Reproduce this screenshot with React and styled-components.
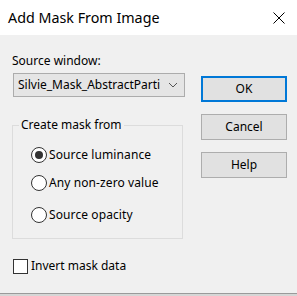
import React from "react";
import styled, { createGlobalStyle } from "styled-components";

const GlobalStyle = createGlobalStyle`
  html, body {
    margin: 0;
    padding: 0;
    background: #d6d6d6;
  }
  * {
    box-sizing: border-box;
  }
`;

const font = `"Noto Sans", "Open Sans", Arial, sans-serif`;

//#region Styled Components
const Dialog = styled.div`
  width: 297px;
  height: 294px;
  background: #f0f0f0;
  border-bottom: 1px solid #9a9a9a;
  font-family: ${font};
  font-size: 12px;
  color: #000;
  display: flex;
  flex-direction: column;
`;

const TitleBar = styled.div`
  height: 35px;
  background: #ffffff;
  display: flex;
  align-items: center;
  justify-content: space-between;
  padding: 0 12px 0 8px;
`;

const Title = styled.div`
  font-size: 14.3px;
  line-height: 20px;
  margin-top: 1px;
`;

const CloseButton = styled.div`
  width: 12px;
  height: 12px;
  display: flex;
  margin-top: 1px;
`;

const Body = styled.div`
  display: flex;
  gap: 16px;
  padding: 0 10px 0 12px;
`;

const LeftColumn = styled.div`
  width: 173px;
  display: flex;
  flex-direction: column;
`;

const Label = styled.div`
  line-height: 16px;
  margin-top: 18px;
`;

const Select = styled.div`
  margin-top: 4px;
  margin-left: 1px;
  height: 24px;
  width: 172px;
  background: #e5e5e5;
  border: 1px solid #acacac;
  display: flex;
  align-items: center;
  justify-content: space-between;
  padding: 0 6px 0 4px;
  line-height: 16px;
`;

const GroupBox = styled.fieldset`
  margin: 20px 0 0 0;
  width: 171px;
  padding: 0 0 15px 0;
  border: 1px solid #dcdcdc;
  display: flex;
  flex-direction: column;
`;

const Legend = styled.legend`
  margin-left: 6px;
  padding: 0 2px;
  line-height: 16px;
`;

const RadioRow = styled.label`
  display: flex;
  align-items: center;
  gap: 2px;
  margin-left: 18px;
  margin-top: ${({ $top }) => $top}px;
  line-height: 16px;
  letter-spacing: 0.1px;
`;

const RadioCircle = styled.span`
  width: 16px;
  height: 16px;
  border-radius: 50%;
  border: 1px solid #333;
  background: #fff;
  display: flex;
  align-items: center;
  justify-content: center;

  &::after {
    content: "";
    width: 8px;
    height: 8px;
    border-radius: 50%;
    background: ${({ $checked }) => ($checked ? "#333" : "transparent")};
  }
`;

const CheckRow = styled.label`
  display: flex;
  align-items: center;
  gap: 3px;
  margin-top: 19px;
  margin-left: 1px;
  line-height: 16px;
`;

const CheckBox = styled.span`
  width: 15px;
  height: 15px;
  border: 1px solid #333;
  background: #fff;
`;

const ButtonColumn = styled.div`
  display: flex;
  flex-direction: column;
  gap: 12px;
  margin-top: 41px;
`;

const Button = styled.div`
  width: 86px;
  height: 26px;
  background: #e1e1e1;
  border: ${({ $primary }) => ($primary ? "2px solid #0078d7" : "1px solid #adadad")};
  display: flex;
  align-items: center;
  justify-content: center;
  line-height: 16px;
`;
//#endregion Styled Components

const options = [
  { label: "Source luminance", checked: true, top: 14 },
  { label: "Any non-zero value", checked: false, top: 12 },
  { label: "Source opacity", checked: false, top: 16 },
];

function Chevron() {
  return (
    <svg width="10" height="6" viewBox="0 0 10 6">
      <path d="M1 1 L5 5 L9 1" fill="none" stroke="#555" strokeWidth="1" />
    </svg>
  );
}

export default function App() {
  return (
    <>
      <GlobalStyle />
      <Dialog>
        <TitleBar>
          <Title>Add Mask From Image</Title>
          <CloseButton>
            <svg width="12" height="12" viewBox="0 0 12 12">
              <path d="M0.5 0.5 L11.5 11.5 M11.5 0.5 L0.5 11.5" stroke="#000" strokeWidth="1" />
            </svg>
          </CloseButton>
        </TitleBar>
        <Body>
          <LeftColumn>
            <Label>Source window:</Label>
            <Select>
              <span>Silvie_Mask_AbstractParti</span>
              <Chevron />
            </Select>
            <GroupBox>
              <Legend>Create mask from</Legend>
              {options.map((option) => (
                <RadioRow key={option.label} $top={option.top}>
                  <RadioCircle $checked={option.checked} />
                  <span>{option.label}</span>
                </RadioRow>
              ))}
            </GroupBox>
            <CheckRow>
              <CheckBox />
              <span>Invert mask data</span>
            </CheckRow>
          </LeftColumn>
          <ButtonColumn>
            <Button $primary>OK</Button>
            <Button>Cancel</Button>
            <Button>Help</Button>
          </ButtonColumn>
        </Body>
      </Dialog>
    </>
  );
}
